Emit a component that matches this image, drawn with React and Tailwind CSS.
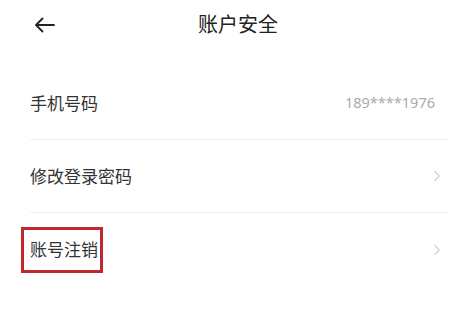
import { ChevronRight } from "lucide-react";

const font = { fontFamily: '"Noto Sans", "Noto Sans CJK SC", sans-serif' };

function Row({ label, value, arrow, boxed, last }) {
  return (
    <div className={`flex h-[73px] items-center justify-between ${last ? "" : "border-b border-[#f0f0f0]"}`}>
      <span
        className={`text-[17px] leading-none text-[#333] ${
          boxed ? "-ml-[9px] flex h-[46px] w-[82px] items-center border-[3px] border-[#c1272d] pl-[6px]" : ""
        }`}
      >
        {label}
      </span>
      {value && <span className="mr-[13px] text-[14.5px] text-[#aaa]">{value}</span>}
      {arrow && <ChevronRight className="mr-[2px] h-[18px] w-[18px] text-[#cfcfcf]" strokeWidth={1.5} />}
    </div>
  );
}

export default function App() {
  return (
    <div className="h-[323px] w-[461px] overflow-hidden bg-white" style={font}>
      {/* Header */}
      <header className="relative flex h-[49px] items-center justify-center">
        <svg
          className="absolute left-[34px] top-[17px]"
          width="22"
          height="16"
          viewBox="0 0 22 16"
          fill="none"
          stroke="#222"
          strokeWidth="1.8"
          strokeLinecap="round"
          strokeLinejoin="round"
        >
          <path d="M20 8H2M8.5 1.5L2 8l6.5 6.5" />
        </svg>
        <h1 className="ml-[15px] text-[20px] font-normal text-[#222]">账户安全</h1>
      </header>

      {/* Rows */}
      <div className="ml-[30px] mr-[13px] mt-[18px]">
        <Row label="手机号码" value="189****1976" />
        <Row label="修改登录密码" arrow />
        <Row label="账号注销" arrow boxed last />
      </div>
    </div>
  );
}
